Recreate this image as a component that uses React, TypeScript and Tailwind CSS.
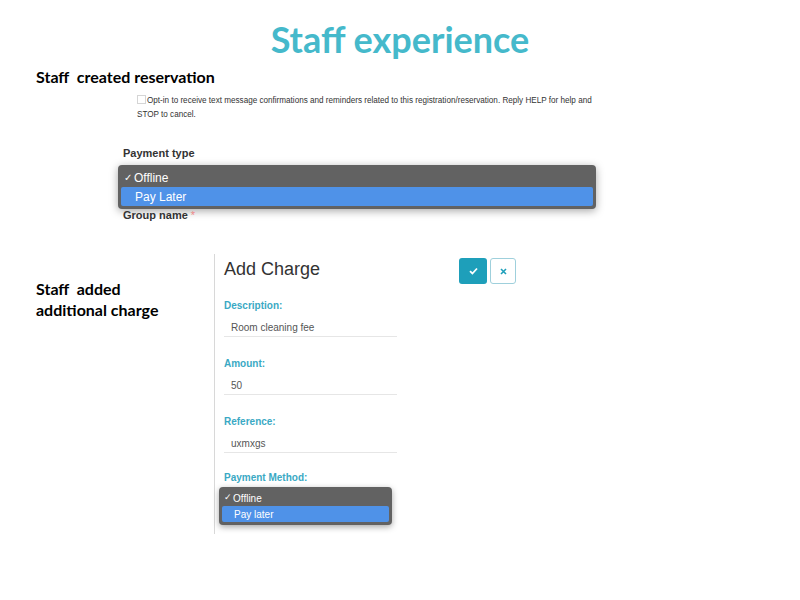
import React from 'react';

const heading = { fontFamily: 'Lato, "Open Sans", sans-serif' };
const form = { fontFamily: '"Liberation Sans", Arial, sans-serif' };

const Field: React.FC<{ label: string; value: string }> = ({ label, value }) => (
    <div className="mt-[20px]">
        <div className="text-[10px] font-bold leading-[14px] text-[#3aa9c4]">{label}</div>
        <div className="mt-[8px] w-[173px] border-b border-[#e6e6e6] pb-[1px] pl-[7px] text-[10px] leading-[14px] text-[#555]">
            {value}
        </div>
    </div>
);

export default function App() {
    return (
        <div className="h-[600px] w-[800px] bg-white">
            {/* Title */}
            <h1
                style={heading}
                className="pt-[17px] text-center text-[36px] font-bold leading-[44px] text-[#45b9cb]"
            >
                Staff experience
            </h1>

            {/* Staff created reservation */}
            <h2 style={heading} className="mt-[6px] pl-[36px] text-[16px] font-bold leading-[19px] text-black">
                Staff&nbsp; created reservation
            </h2>

            <div style={form} className="pl-[118px]">
                <div className="mt-[8px] pl-[19px] text-[8.15px] leading-[14px] text-[#333]">
                    <span className="mr-[1px] inline-block h-[9px] w-[9px] border border-[#d5d5d5] bg-white align-[-1px]" />
                    Opt-in to receive text message confirmations and reminders related to this registration/reservation. Reply HELP for help and
                    <br />
                    STOP to cancel.
                </div>

                <div className="mt-[24px] pl-[5px] text-[11px] font-bold leading-[14px] text-[#333]">Payment type</div>

                {/* Open select */}
                <div className="mt-[5px] w-[478px] rounded-[4px] bg-[#626262] p-[3px] shadow-[0_2px_8px_rgba(0,0,0,0.35)]">
                    <div className="flex h-[19px] items-center pl-[3px] text-[12px] text-white">
                        <span className="mr-[2px] text-[10px]">✓</span>Offline
                    </div>
                    <div className="flex h-[19px] items-center rounded-[2px] bg-[#4f92e8] pl-[14px] text-[12px] text-white">
                        Pay Later
                    </div>
                </div>

                <div className="pl-[5px] text-[11px] font-bold leading-[13px] text-[#333]">
                    Group name <span className="font-normal text-[#e88]">*</span>
                </div>
            </div>

            {/* Staff added additional charge */}
            <div className="mt-[32px] flex">
                <div style={heading} className="w-[214px] pl-[36px] pt-[24px] text-[16px] font-bold leading-[21px] text-black">
                    Staff&nbsp; added
                    <br />
                    additional charge
                </div>

                <div style={form} className="h-[280px] border-l border-[#d8d8d8] pl-[9px]">
                    <div className="flex w-[292px] items-start justify-between pt-[4px]">
                        <div className="text-[18px] leading-[22px] text-[#333]">Add Charge</div>
                        <div className="flex gap-[3px]">
                            <button className="flex h-[26px] w-[28px] items-center justify-center rounded-[3px] bg-[#1e9fba]">
                                <svg width="9" height="8" viewBox="0 0 9 8">
                                    <path d="M1 4.2 3.4 6.5 8 1.5" fill="none" stroke="white" strokeWidth="1.8" />
                                </svg>
                            </button>
                            <button className="flex h-[26px] w-[26px] items-center justify-center rounded-[3px] border border-[#9fd0dc] bg-white">
                                <svg width="7" height="7" viewBox="0 0 7 7">
                                    <path d="M1 1 6 6M6 1 1 6" fill="none" stroke="#1e9fba" strokeWidth="1.6" />
                                </svg>
                            </button>
                        </div>
                    </div>

                    <div className="-mt-[5px]">
                        <Field label="Description:" value="Room cleaning fee" />
                        <Field label="Amount:" value="50" />
                        <Field label="Reference:" value="uxmxgs" />
                    </div>

                    <div className="mt-[18px] text-[10px] font-bold leading-[14px] text-[#3aa9c4]">Payment Method:</div>

                    <div className="-ml-[5px] mt-[2px] w-[173px] rounded-[4px] bg-[#626262] p-[3px] shadow-[0_2px_6px_rgba(0,0,0,0.35)]">
                        <div className="flex h-[16px] items-center pl-[2px] text-[10px] text-white">
                            <span className="mr-[1px] text-[9px]">✓</span>Offline
                        </div>
                        <div className="flex h-[16px] items-center rounded-[2px] bg-[#4f92e8] pl-[12px] text-[10px] text-white">
                            Pay later
                        </div>
                    </div>
                </div>
            </div>
        </div>
    );
}
